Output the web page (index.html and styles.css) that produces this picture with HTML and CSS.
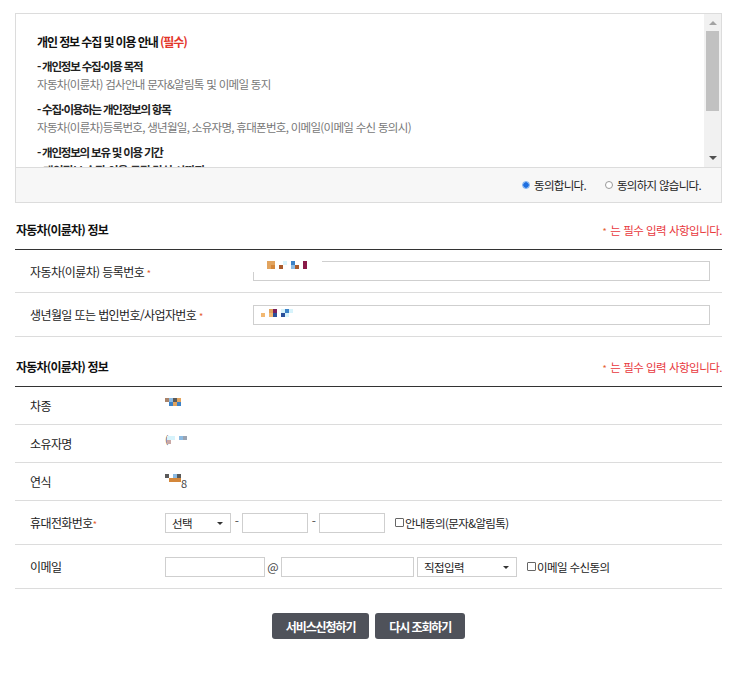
FILE: index.html
```html
<!DOCTYPE html>
<html lang="ko">
<head>
  <meta charset="UTF-8" />
  <meta name="viewport" content="width=device-width, initial-scale=1.0" />
  <title>자동차(이륜차) 검사안내 서비스 신청</title>
  <link rel="stylesheet" href="styles.css">
</head>
<body>
  <div class="wrap">

    <div class="agree-box">
      <div class="agree-scroll">
        <div class="agree-text">
          <p class="agree-title">개인 정보 수집 및 이용 안내 <em>(필수)</em></p>
          <h4>- 개인정보 수집·이용 목적</h4>
          <p>자동차(이륜차) 검사안내 문자&amp;알림톡 및 이메일 동지</p>
          <h4>- 수집·이용하는 개인정보의 항목</h4>
          <p>자동차(이륜차)등록번호, 생년월일, 소유자명, 휴대폰번호, 이메일(이메일 수신 동의시)</p>
          <h4>- 개인정보의 보유 및 이용 기간</h4>
          <p class="dark">- 개인정보 수집·이용 목적 달성 시까지</p>
        </div>
        <div class="scrollbar">
          <span class="arrow-up"></span>
          <span class="thumb"></span>
          <span class="arrow-down"></span>
        </div>
      </div>
      <div class="agree-foot">
        <label><input type="radio" name="agree" checked>동의합니다.</label>
        <label><input type="radio" name="agree">동의하지 않습니다.</label>
      </div>
    </div>

    <!-- 조회 조건 -->
    <div class="sec-head first">
      <h3>자동차(이륜차) 정보</h3>
      <p class="req-note"><span class="star">*</span> 는 필수 입력 사항입니다.</p>
    </div>
    <div class="form-table">
      <div class="row">
        <div class="th wide">자동차(이륜차) 등록번호 <span class="star">*</span></div>
        <div class="td">
          <span class="field">
            <input type="text" class="txt-long">
            <span class="mosaic cover cols-10">
              <i class="c-tan"></i><i class="c-tan"></i><i></i><i></i><i class="c-cyan"></i><i></i><i class="c-blue"></i><i></i><i></i><i class="c-maroon"></i>
              <i class="c-tan"></i><i class="c-orange"></i><i></i><i class="c-brown"></i><i></i><i></i><i class="c-lblue"></i><i class="c-brown"></i><i></i><i class="c-maroon"></i>
            </span>
          </span>
        </div>
      </div>
      <div class="row">
        <div class="th wide">생년월일 또는 법인번호/사업자번호 <span class="star">*</span></div>
        <div class="td">
          <span class="field">
            <input type="text" class="txt-long">
            <span class="mosaic low cols-9">
              <i></i><i></i><i class="c-tan"></i><i class="c-purple"></i><i></i><i class="c-cyan"></i><i class="c-blue"></i><i class="c-cyan"></i><i></i>
              <i class="c-peach"></i><i></i><i class="c-peach"></i><i class="c-navy"></i><i></i><i class="c-navy"></i><i class="c-cyan"></i><i></i><i></i>
            </span>
          </span>
        </div>
      </div>
    </div>

    <!-- 조회 결과 -->
    <div class="sec-head">
      <h3>자동차(이륜차) 정보</h3>
      <p class="req-note"><span class="star">*</span> 는 필수 입력 사항입니다.</p>
    </div>
    <div class="form-table">
      <div class="row short">
        <div class="th">차종</div>
        <div class="td top">
          <span class="mosaic cols-4">
            <i class="c-brown2"></i><i class="c-lblue"></i><i class="c-dgray"></i><i class="c-tan"></i>
            <i></i><i class="c-blue"></i><i class="c-tan"></i><i class="c-blue"></i>
          </span>
        </div>
      </div>
      <div class="row short">
        <div class="th">소유자명</div>
        <div class="td top">
          <span class="paren">(</span><span class="mosaic cols-5">
            <i class="c-cyan"></i><i class="c-cyan"></i><i></i><i class="c-lblue"></i><i class="c-gray"></i>
            <i class="c-pink"></i><i></i><i></i><i></i><i></i>
          </span>
        </div>
      </div>
      <div class="row short">
        <div class="th">연식</div>
        <div class="td top">
          <span class="mosaic cols-4">
            <i class="c-dgray"></i><i></i><i class="c-lblue"></i><i class="c-dgray"></i>
            <i></i><i class="c-orange"></i><i class="c-orange"></i><i class="c-orange"></i>
          </span><span class="year">8</span>
        </div>
      </div>
      <div class="row">
        <div class="th">휴대전화번호<span class="star">*</span></div>
        <div class="td">
          <span class="select-wrap sel-phone">
            <select>
              <option>선택</option>
              <option>010</option>
              <option>011</option>
            </select>
          </span>
          <span class="dash">-</span>
          <input type="text" class="txt-phone">
          <span class="dash">-</span>
          <input type="text" class="txt-phone">
          <label class="chk"><input type="checkbox">안내동의(문자&amp;알림톡)</label>
        </div>
      </div>
      <div class="row">
        <div class="th">이메일</div>
        <div class="td">
          <input type="text" class="txt-mail-id">
          <span class="at">@</span>
          <input type="text" class="txt-mail-domain">
          <span class="select-wrap sel-mail">
            <select>
              <option>직접입력</option>
              <option>naver.com</option>
              <option>gmail.com</option>
            </select>
          </span>
          <label class="chk"><input type="checkbox">이메일 수신동의</label>
        </div>
      </div>
    </div>

    <div class="buttons">
      <button type="button" class="btn">서비스신청하기</button>
      <button type="button" class="btn">다시 조회하기</button>
    </div>

  </div>
</body>
</html>
```

FILE: styles.css
```css
body {
  margin: 0;
  padding: 0;
  background: #fff;
  color: #222;
  font-family: "Noto Sans CJK KR", "Liberation Sans", sans-serif;
  font-size: 12px;
  letter-spacing: -0.6px;
}

.wrap {
  width: 707px;
  margin: 0;
  padding: 13px 0 40px 15px;
}

/* 개인정보 동의 박스 */
.agree-box {
  border: 1px solid #dcdcdc;
}
.agree-scroll {
  display: flex;
  height: 153px;
  border-bottom: 1px solid #dcdcdc;
  overflow: hidden;
}
.agree-text {
  flex: 1;
  padding: 19px 0 0 21px;
}
.agree-text p,
.agree-text h4 {
  margin: 0;
}
.agree-text h4 {
  margin-top: 6px;
  font-size: 11.5px;
  line-height: 18px;
  letter-spacing: -1.2px;
  color: #222;
}
.agree-text p {
  font-size: 11.5px;
  line-height: 19px;
  letter-spacing: -0.7px;
  color: #777;
}
.agree-text p.agree-title {
  font-size: 12px;
  font-weight: bold;
  line-height: 18px;
  letter-spacing: -1.1px;
  color: #111;
}
.agree-title em {
  font-style: normal;
  color: #e3362b;
}
.agree-text p.dark {
  color: #333;
  font-weight: bold;
}

.scrollbar {
  width: 17px;
  background: #f1f1f1;
  display: flex;
  flex-direction: column;
  align-items: center;
}
.arrow-up {
  margin-top: 7px;
  width: 0;
  height: 0;
  border-left: 4px solid transparent;
  border-right: 4px solid transparent;
  border-bottom: 4px solid #a3a3a3;
}
.thumb {
  margin-top: 6px;
  width: 13px;
  height: 80px;
  background: #c1c1c1;
}
.arrow-down {
  margin-top: auto;
  margin-bottom: 7px;
  width: 0;
  height: 0;
  border-left: 4px solid transparent;
  border-right: 4px solid transparent;
  border-top: 4px solid #505050;
}

.agree-foot {
  height: 34px;
  background: #f7f7f7;
  display: flex;
  justify-content: flex-end;
  align-items: center;
  gap: 19px;
  padding-right: 20px;
  font-size: 11.5px;
  letter-spacing: -0.7px;
  color: #222;
}
.agree-foot label {
  display: flex;
  align-items: center;
}
.agree-foot input[type="radio"] {
  appearance: none;
  -webkit-appearance: none;
  margin: 0 4px 0 0;
  width: 8px;
  height: 8px;
  border: 1px solid #9a9a9a;
  border-radius: 50%;
  background: #fff;
  box-sizing: border-box;
}
.agree-foot input[type="radio"]:checked {
  border-color: #7fb1ef;
  background: radial-gradient(circle, #1f6fe0 0, #1f6fe0 2.5px, #8fbcf3 3px);
}

/* 섹션 제목 */
.sec-head {
  display: flex;
  justify-content: space-between;
  align-items: center;
  height: 20px;
  margin-top: 20px;
  padding-bottom: 9px;
  border-bottom: 1px solid #333;
  line-height: 20px;
}
.sec-head.first {
  margin-top: 17px;
}
.sec-head h3 {
  margin: 0 0 0 1px;
  font-size: 12px;
  font-weight: bold;
  letter-spacing: -0.8px;
  color: #111;
}
.req-note {
  margin: 0;
  font-size: 11.5px;
  letter-spacing: -0.5px;
  color: #e8383d;
}
.star {
  color: #e5602f;
  font-size: 9px;
  line-height: 1;
  letter-spacing: 0;
}
.req-note .star {
  margin-right: 1px;
}

/* 입력 테이블 */
.row {
  display: flex;
  align-items: center;
  height: 42px;
  border-bottom: 1px solid #dcdcdc;
}
.row + .row {
  height: 43px;
}
.row.short {
  height: 37px;
}
.th {
  width: 135px;
  padding-left: 15px;
  flex-shrink: 0;
  font-size: 12px;
  letter-spacing: -0.6px;
  color: #222;
}
.th.wide {
  width: 223px;
}
.td {
  flex: 1;
  display: flex;
  align-items: center;
  height: 100%;
}
.td.top {
  align-items: flex-start;
  padding-top: 11px;
  box-sizing: border-box;
}

input[type="text"],
select {
  height: 20px;
  margin: 0;
  padding: 0 6px;
  box-sizing: border-box;
  border: 1px solid #cfcfcf;
  background: #fff;
  font-family: inherit;
  font-size: 11.5px;
  letter-spacing: -0.6px;
  color: #222;
  border-radius: 0;
  outline: none;
}
.select-wrap {
  position: relative;
  display: inline-block;
  height: 20px;
}
.select-wrap select {
  appearance: none;
  -webkit-appearance: none;
  width: 100%;
  display: block;
}
.select-wrap::after {
  content: "";
  position: absolute;
  right: 8px;
  top: 9px;
  width: 0;
  height: 0;
  border-left: 3px solid transparent;
  border-right: 3px solid transparent;
  border-top: 3px solid #333;
  pointer-events: none;
}

.field {
  position: relative;
  display: inline-block;
}
.txt-long {
  width: 457px;
}
.txt-phone {
  width: 66px;
}
.sel-phone {
  width: 66px;
}
.txt-mail-id {
  width: 100px;
}
.txt-mail-domain {
  width: 133px;
}
.sel-mail {
  width: 100px;
  margin-left: 3px;
}
.dash {
  width: 11px;
  margin-top: -5px;
  text-align: center;
  color: #555;
}
.at {
  width: 16px;
  text-align: center;
  color: #444;
  letter-spacing: 0;
}

.chk {
  display: flex;
  align-items: center;
  margin-left: 10px;
  font-size: 11.5px;
  letter-spacing: -0.6px;
  color: #222;
}
.chk input[type="checkbox"] {
  appearance: none;
  -webkit-appearance: none;
  margin: 0 1px 0 0;
  width: 9px;
  height: 9px;
  border: 1px solid #666;
  border-radius: 1px;
  background: #fff;
  box-sizing: border-box;
}

/* 마스킹 처리된 값 */
.mosaic {
  display: inline-grid;
  grid-auto-rows: 4px;
}
.cols-4 { grid-template-columns: repeat(4, 4px); }
.cols-5 { grid-template-columns: repeat(5, 4px); }
.cols-9 { grid-template-columns: repeat(9, 4px); }
.cols-10 { grid-template-columns: repeat(10, 4px); }
.field .mosaic {
  position: absolute;
  left: 15px;
  top: 2px;
}
.field .mosaic.cover {
  left: -1px;
  top: -2px;
  padding: 2px 15px 3px 15px;
  background: #fff;
}
.field .mosaic.low {
  left: 8px;
  top: 4px;
}
.mosaic i { display: block; }
.c-tan { background: #e2a45f; }
.c-orange { background: #d4873a; }
.c-brown { background: #a85a2c; }
.c-brown2 { background: #a9836a; }
.c-cyan { background: #d7f3fb; }
.c-blue { background: #3c82c8; }
.c-lblue { background: #8cbbe3; }
.c-navy { background: #2a4f9a; }
.c-maroon { background: #8a1a48; }
.c-purple { background: #7a1f5a; }
.c-peach { background: #f2b872; }
.c-dgray { background: #5a5a5a; }
.c-gray { background: #9aa3b1; }
.c-pink { background: #c9a9a6; }
.paren {
  margin-right: -1px;
  line-height: 8px;
  font-size: 10px;
  color: #555;
}
.year {
  margin-top: 3px;
  font-size: 11px;
  line-height: 12px;
  letter-spacing: 0;
  color: #444;
}

/* 버튼 */
.buttons {
  display: flex;
  justify-content: center;
  gap: 6px;
  margin-top: 24px;
}
.btn {
  height: 26px;
  padding: 0 14px;
  border: 0;
  border-radius: 3px;
  background: #4f525a;
  color: #fff;
  font-family: inherit;
  font-size: 12px;
  font-weight: bold;
  letter-spacing: -1.1px;
  cursor: pointer;
}
```
